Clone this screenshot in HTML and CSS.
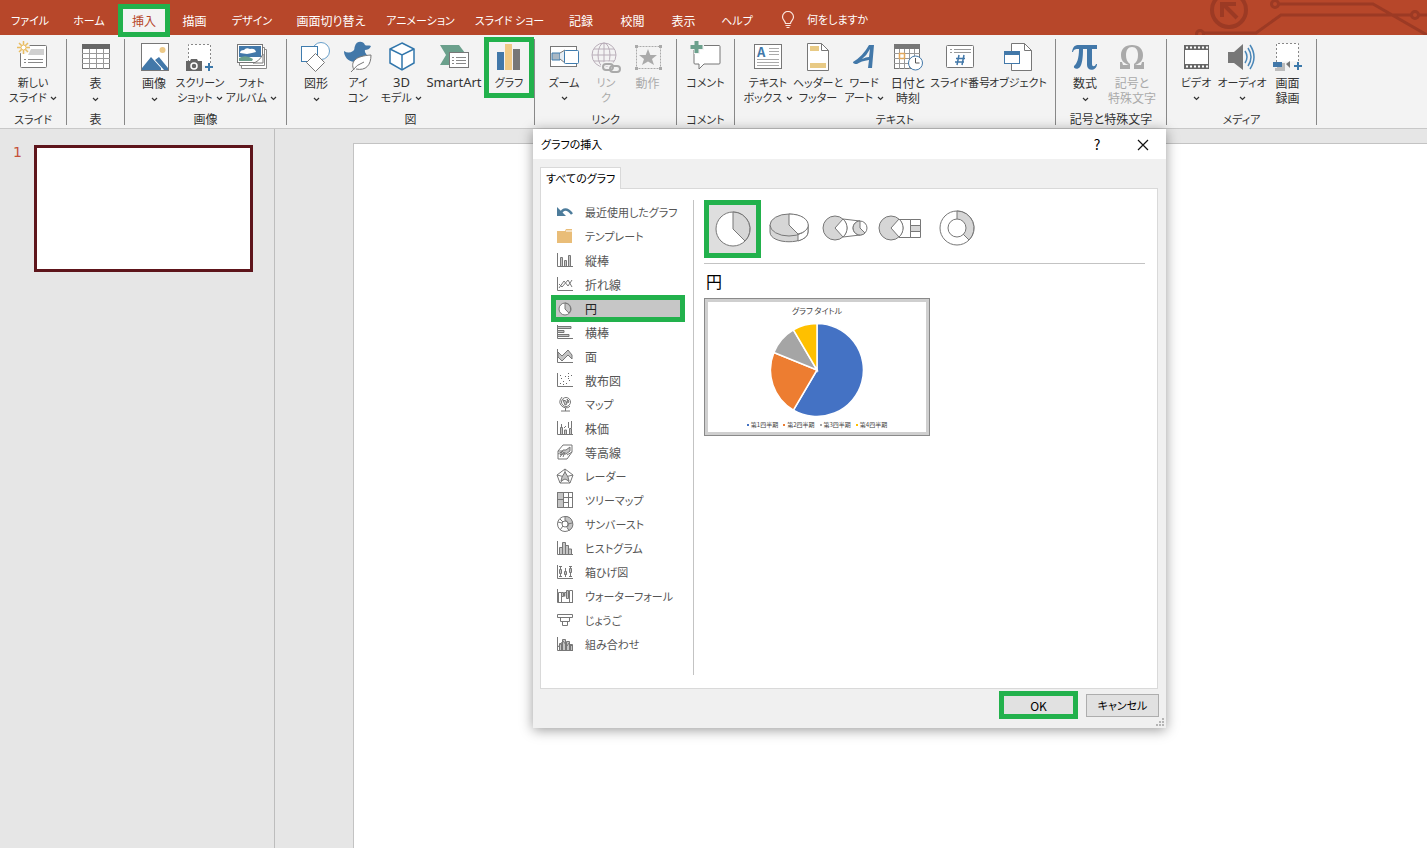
FILE: index.html
```html
<!DOCTYPE html>
<html lang="ja">
<head>
  <meta charset="UTF-8">
  <meta name="viewport" content="width=device-width, initial-scale=1.0">
  <title>グラフの挿入</title>
  <link rel="stylesheet" href="styles.css">
</head>
<body>
  <!-- shared shapes -->
  <svg class="defs" width="0" height="0">
    <symbol id="chev" viewBox="0 0 7 5"><path d="M1 1l2.500 2.500L6 1" fill="none" stroke="#333" stroke-width="1.200"/></symbol>
  </svg>

  <nav class="tabs">
    <div class="tab-list">
      <button class="tab kana">ファイル</button>
      <button class="tab kana">ホーム</button>
      <button class="tab active marked">挿入</button>
      <button class="tab">描画</button>
      <button class="tab kana">デザイン</button>
      <button class="tab">画面切り替え</button>
      <button class="tab kana">アニメーション</button>
      <button class="tab kana">スライド ショー</button>
      <button class="tab">記録</button>
      <button class="tab">校閲</button>
      <button class="tab">表示</button>
      <button class="tab kana">ヘルプ</button>
    </div>
    <button class="tell-me kana">
      <svg width="14" height="18" viewBox="0 0 14 18" fill="none" stroke="#fbe6df" stroke-width="1.200"><path d="M4.500 12.500c0-2.500-3-3.500-3-6.500a5.500 5.500 0 0 1 11 0c0 3-3 4-3 6.500zM4.500 14.500h5M5.500 16.500h3"/></svg>
      何をしますか
    </button>
    <svg class="circuit" width="240" height="35" viewBox="0 0 240 35" fill="none" stroke="#9c3a24" stroke-width="3">
      <circle cx="42" cy="10" r="17" stroke-width="4"/>
      <path d="M50 18L36 4M35 17V4h14" stroke-width="4"/>
      <circle cx="88" cy="4" r="3.500"/>
      <path d="M92 4h94l54 31M17 33h52l25-18h130"/>
      <circle cx="13" cy="34" r="3.500"/>
      <circle cx="228" cy="15" r="3.500"/>
      <path d="M232 15h8"/>
    </svg>
  </nav>

  <div class="ribbon">
    <section class="group">
      <div class="tools cols-slide">
        <button class="tool">
          <svg viewBox="0 0 32 32"><rect x="3.500" y="4.500" width="26" height="22" rx="1" fill="#fff" stroke="#777"/><path d="M14 8h13v6H11z" fill="#d0d0d0"/><path d="M7 18.500h2m2 0h15M7 21.500h2m2 0h15" stroke="#888"/><circle cx="6.500" cy="6.500" r="6.500" fill="#f3f3f3"/><path d="M6.500 0v13M0 6.500h13M2 2l9 9M11 2l-9 9" stroke="#e9bd62" stroke-width="1.500"/><circle cx="6.500" cy="6.500" r="2.500" fill="#fff" stroke="#e9bd62"/></svg>
          <span class="kana">新しい<br>スライド <svg class="chev"><use href="#chev"/></svg></span>
        </button>
      </div>
      <h2 class="kana">スライド</h2>
    </section>

    <section class="group">
      <div class="tools cols-table">
        <button class="tool">
          <svg viewBox="0 0 32 32"><rect x="2.500" y="3.500" width="27" height="24" fill="#fff" stroke="#777"/><path d="M2 3h28v5H2z" fill="#666"/><path d="M2 12.500h28M2 17.500h28M2 22.500h28M9.500 8v20M16.500 8v20M23.500 8v20" stroke="#999"/></svg>
          <span>表<br><svg class="chev"><use href="#chev"/></svg></span>
        </button>
      </div>
      <h2>表</h2>
    </section>

    <section class="group">
      <div class="tools cols-image">
        <button class="tool">
          <svg viewBox="0 0 32 32"><rect x="3.500" y="2.500" width="27" height="27" fill="#fff" stroke="#777"/><circle cx="24.500" cy="9" r="3" fill="#edc987"/><path d="M4 27l9-11 10 11v2H4zM17 19l4-3 9 11v2h-4z" fill="#4278a9"/></svg>
          <span>画像<br><svg class="chev"><use href="#chev"/></svg></span>
        </button>
        <button class="tool">
          <svg viewBox="0 0 32 32"><path d="M4.500 25V3.500h22V24" fill="#fff" stroke="#888" stroke-dasharray="2 2"/><path d="M3 20h3l1-2h6l1 2h4v10H2v-10z" fill="#666"/><circle cx="10" cy="25" r="3" fill="#666" stroke="#fff" stroke-width="1.500"/><path d="M25 22v8M21 26h8" stroke="#3b78aa" stroke-width="2"/></svg>
          <span class="kana">スクリーン<br>ショット <svg class="chev"><use href="#chev"/></svg></span>
        </button>
        <button class="tool">
          <svg viewBox="0 0 32 32"><path d="M5.500 12v15.500h25V8.500H28" fill="#fff" stroke="#888"/><path d="M3.500 9v15.500h25V6.500H26" fill="#fff" stroke="#888"/><rect x="1.500" y="3.500" width="25" height="18" fill="#fff" stroke="#777"/><path d="M3 5h22v11H3z" fill="#4278a9"/><path d="M4 12q0-3 4-3 2-3 6-1 5-1 6 3l-4 1-5 1z" fill="#fff"/><path d="M3 20v-3q7-4 14 1l-1 2z" fill="#6b9f8c"/><path d="M27 13v9H17q6-1 10-9z" fill="#fff" stroke="#777"/></svg>
          <span class="kana">フォト<br>アルバム <svg class="chev"><use href="#chev"/></svg></span>
        </button>
      </div>
      <h2>画像</h2>
    </section>

    <section class="group">
      <div class="tools cols-figure">
        <button class="tool">
          <svg viewBox="0 0 32 32"><circle cx="21" cy="10" r="8.500" fill="#fff" stroke="#69a0cb"/><rect x="1.500" y="5.500" width="16" height="15" fill="#fff" stroke="#3f7cae"/><path d="M15.500 12.500l9 9-9 9-9-9z" fill="#fff" stroke="#777"/></svg>
          <span>図形<br><svg class="chev"><use href="#chev"/></svg></span>
        </button>
        <button class="tool">
          <svg viewBox="0 0 32 32"><path d="M2 10c3 2 6 2 9 0 2-1 1-3 2-5 1-5 8-6 10-1 1 1 4 0 6 1-1 3-4 4-6 4-1 3 3 4 2 8-1 4-7 5-13 4C6 20 2 16 2 10z" fill="#4278a9"/><path d="M12 29c-4-8 1-14 17-15 0 10-5 16-15 14" fill="#fff" stroke="#777"/><path d="M9 31q6-8 13-10" fill="none" stroke="#777"/></svg>
          <span class="kana">アイ<br>コン</span>
        </button>
        <button class="tool">
          <svg viewBox="0 0 32 32" fill="#fff" stroke="#3277ac" stroke-width="1.500"><path d="M16 2l12 6v14l-12 7-12-7V8z"/><path d="M4 8l12 6 12-6M16 14v15" fill="none"/></svg>
          <span class="kana"><span class="latin">3D</span><br>モデル <svg class="chev"><use href="#chev"/></svg></span>
        </button>
        <button class="tool">
          <svg viewBox="0 0 32 32"><path d="M2 4h19l6 8-8 12H2l6-10z" fill="#6ba08c"/><rect x="11.500" y="11.500" width="19" height="15" fill="#fff" stroke="#777"/><path d="M14 16.500h2m2 0h10M14 19.500h2m2 0h10M14 22.500h2m2 0h10" stroke="#888"/></svg>
          <span class="latin">SmartArt</span>
        </button>
        <button class="tool marked">
          <svg viewBox="0 0 32 32"><path d="M4 10h7v18H4z" fill="#4278a9"/><path d="M12 2h7v26h-7z" fill="#efc984"/><path d="M20 7h7v21h-7z" fill="#777"/></svg>
          <span class="kana">グラフ</span>
        </button>
      </div>
      <h2>図</h2>
    </section>

    <section class="group">
      <div class="tools cols-link">
        <button class="tool">
          <svg viewBox="0 0 32 32"><rect x="2.500" y="5.500" width="26" height="20" fill="#fff" stroke="#777"/><path d="M4 12h8v7H4z" fill="#aab8c4" stroke="#3f7cae"/><path d="M12 12l5-3v13l-5-4" fill="#e6edf3" stroke="#777"/><rect x="16.500" y="9.500" width="14" height="13" rx="1" fill="#fff" stroke="#3f7cae"/></svg>
          <span class="kana">ズーム<br><svg class="chev"><use href="#chev"/></svg></span>
        </button>
        <button class="tool" disabled>
          <svg viewBox="0 0 32 32" fill="none" stroke="#b9aeb9"><circle cx="14" cy="14" r="12"/><ellipse cx="14" cy="14" rx="6" ry="12"/><path d="M14 2v24M2 14h24M4 8h20M4 20h20"/><g stroke="#f3f3f3" stroke-width="5"><rect x="13" y="23" width="10" height="6" rx="3"/><rect x="20" y="25" width="10" height="6" rx="3"/></g><g stroke="#aaa" stroke-width="2"><rect x="13" y="23" width="10" height="6" rx="3"/><rect x="20" y="25" width="10" height="6" rx="3"/></g></svg>
          <span class="kana">リン<br>ク</span>
        </button>
        <button class="tool" disabled>
          <svg viewBox="0 0 32 32"><rect x="4.500" y="5.500" width="24" height="22" fill="none" stroke="#aaa" stroke-dasharray="2 1"/><path d="M3 4h3v3H3zM27 4h3v3h-3zM3 26h3v3H3zM27 26h3v3h-3z" fill="#aaa"/><path d="M16 8l2.300 6H25l-5 4 2 6-6-3.500L10 24l2-6-5-4h6.700z" fill="#aaa"/></svg>
          <span>動作</span>
        </button>
      </div>
      <h2 class="kana">リンク</h2>
    </section>

    <section class="group">
      <div class="tools cols-comment">
        <button class="tool">
          <svg viewBox="0 0 32 32"><path d="M6 4.500h23a1 1 0 0 1 1 1V22a1 1 0 0 1-1 1H14l-5 5v-5H5a1 1 0 0 1-1-1V6z" fill="#fff" stroke="#777"/><path d="M7 0v13M0 6h14" stroke="#f3f3f3" stroke-width="6"/><path d="M6.500 0v12M.5 6h12" stroke="#6ba08c" stroke-width="4"/></svg>
          <span class="kana">コメント</span>
        </button>
      </div>
      <h2 class="kana">コメント</h2>
    </section>

    <section class="group">
      <div class="tools cols-text">
        <button class="tool">
          <svg viewBox="0 0 32 32"><rect x="2.500" y="3.500" width="27" height="24" fill="#fff" stroke="#777"/><text x="5" y="16" font-size="13" font-weight="bold" fill="#4278a9">A</text><path d="M17 7.500h10M17 10.500h10M17 13.500h10M5 18.500h22M5 21.500h22M5 24.500h22" stroke="#aaa"/></svg>
          <span class="kana">テキスト<br>ボックス <svg class="chev"><use href="#chev"/></svg></span>
        </button>
        <button class="tool">
          <svg viewBox="0 0 32 32"><path d="M5.500 2.500h14l7 7v20h-21z" fill="#fff" stroke="#777"/><path d="M19.500 2.500v7h7" fill="none" stroke="#777"/><path d="M8 5h9v5H8zM8 22h16v5H8z" fill="#e8ca85"/></svg>
          <span class="kana">ヘッダーと<br>フッター</span>
        </button>
        <button class="tool">
          <svg viewBox="0 0 32 32"><path d="M5 21Q15 15 21 4h5l-2 23h-4l1-8q-8 1-12 4-4 0-4-2zM14 18q4-2 7-2l1-8q-3 6-8 10z" fill="#4278a9" fill-rule="evenodd"/></svg>
          <span class="kana">ワード<br>アート <svg class="chev"><use href="#chev"/></svg></span>
        </button>
        <button class="tool">
          <svg viewBox="0 0 32 32"><rect x="2.500" y="3.500" width="25" height="24" fill="#fff" stroke="#777"/><path d="M2 3h26v5H2z" fill="#777"/><path d="M2 12.500h26M2 17.500h26M2 22.500h26M7.500 8v20M12.500 8v20M17.500 8v20M22.500 8v20" stroke="#999"/><rect x="7.500" y="12.500" width="5" height="5" fill="#fff" stroke="#e2a85c" stroke-width="1.500"/><circle cx="23.500" cy="22" r="7" fill="#fff" stroke="#4278a9"/><path d="M23.500 17v5h4" fill="none" stroke="#555"/></svg>
          <span>日付と<br>時刻</span>
        </button>
        <button class="tool">
          <svg viewBox="0 0 32 32"><rect x="2.500" y="4.500" width="27" height="22" rx="1" fill="#fff" stroke="#777"/><path d="M6 8.500h2m2 0h17M6 11.500h2m2 0h17" stroke="#999"/><path d="M15 14l-2 10M20 14l-2 10M12 17.500h9M11 21h9" stroke="#4278a9" stroke-width="1.500"/></svg>
          <span class="kana">スライド番号</span>
        </button>
        <button class="tool">
          <svg viewBox="0 0 32 32"><path d="M9.500 2.500h13l7 7v20h-20z" fill="#fff" stroke="#777"/><path d="M22.500 2.500v7h7" fill="none" stroke="#777"/><rect x="2.500" y="10.500" width="15" height="12" fill="#fff" stroke="#4278a9"/><path d="M2 10h16v4H2z" fill="#4278a9"/></svg>
          <span class="kana">オブジェクト</span>
        </button>
      </div>
      <h2 class="kana">テキスト</h2>
    </section>

    <section class="group">
      <div class="tools cols-symbol">
        <button class="tool">
          <svg viewBox="0 0 32 32"><path d="M3 11c1-6 3-7 7-7h18v4h-5v15c0 3 3 3 4 0h1c0 7-10 8-10 1V8h-4c0 9-1 15-3 18-2 3-7 2-6-1 3-2 5-8 5-17-4 0-5 0-6 3z" fill="#4278a9"/></svg>
          <span>数式<br><svg class="chev"><use href="#chev"/></svg></span>
        </button>
        <button class="tool" disabled>
          <svg viewBox="0 0 32 32"><path d="M4 28v-7h2l1 3h6C7 22 5 19 5 14 5 8 9 4 16 4s11 4 11 10c0 5-2 8-8 10h6l1-3h2v7H18v-5c3-2 4-5 4-9 0-5-2-8-6-8s-6 3-6 8c0 4 1 7 4 9v5z" fill="#aaa"/></svg>
          <span>記号と<br>特殊文字</span>
        </button>
      </div>
      <h2>記号と特殊文字</h2>
    </section>

    <section class="group">
      <div class="tools cols-media">
        <button class="tool">
          <svg viewBox="0 0 32 32"><path d="M4 4h25v24H4z" fill="#666"/><path d="M5 9h23v14H5z" fill="#fff"/><path d="M6 6.500h22M6 25.500h22" stroke="#fff" stroke-width="2" stroke-dasharray="2 2"/></svg>
          <span class="kana">ビデオ<br><svg class="chev"><use href="#chev"/></svg></span>
        </button>
        <button class="tool">
          <svg viewBox="0 0 32 32"><path d="M2 11h6l9-8v26l-9-7H2z" fill="#777"/><path d="M19 10q4 6 0 12M22 7q6 9 0 18M24 4q8 12 0 24" fill="none" stroke="#4a87b8" stroke-width="1.500"/></svg>
          <span class="kana">オーディオ<br><svg class="chev"><use href="#chev"/></svg></span>
        </button>
        <button class="tool">
          <svg viewBox="0 0 32 32"><path d="M4.500 21V2.500h22V20" fill="#fff" stroke="#888" stroke-dasharray="2 2"/><path d="M5 22h8v8H3v-3h2z" fill="#bbb"/><path d="M1 21h9v5H1z" fill="#4278a9"/><path d="M14 23l4-3v7z" fill="#777"/><path d="M26 21v8M22 25h8" stroke="#3b78aa" stroke-width="2"/></svg>
          <span>画面<br>録画</span>
        </button>
      </div>
      <h2 class="kana">メディア</h2>
    </section>
  </div>

  <div class="workspace">
    <aside class="slides">
      <span class="slide-number">1</span>
      <button class="slide-thumb" aria-label="スライド 1"></button>
    </aside>

    <main class="editor">
      <div class="slide"></div>

      <div class="dialog" role="dialog" aria-labelledby="dialog-title">
        <header class="dialog-title">
          <h1 id="dialog-title" class="kana">グラフの挿入</h1>
          <button class="help">?</button>
          <button class="close" aria-label="閉じる"><svg width="12" height="12" viewBox="0 0 12 12"><path d="M1 1l10 10M11 1L1 11" stroke="#111" stroke-width="1.200"/></svg></button>
        </header>

        <button class="panel-tab kana">すべてのグラフ</button>
        <div class="panel">
          <ul class="kinds">
            <li><button class="kana"><svg viewBox="0 0 18 18"><path d="M4 11Q9 2 16 11" fill="none" stroke="#4d7c9b" stroke-width="2.500"/><path d="M1 4v9h9z" fill="#4d7c9b"/></svg>最近使用したグラフ</button></li>
            <li><button class="kana"><svg viewBox="0 0 18 18"><path d="M1 4h8l1-2h6v14H1z" fill="#e9bd78"/><path d="M10 4h6" stroke="#fff"/></svg>テンプレート</button></li>
            <li><button><svg viewBox="0 0 18 18"><path class="axis" d="M1.500 2v13.500H17"/><path class="shape" d="M4.500 15V6.500h2V15M8.500 15V9.500h2V15M12.500 15V4.500h2V15"/></svg>縦棒</button></li>
            <li><button><svg viewBox="0 0 18 18"><path class="axis" d="M1.500 2v13.500H17"/><path class="line" d="M3 13l5-7 4 5 4-6M3 9l3 3 6-7 4 7"/></svg>折れ線</button></li>
            <li><button class="selected marked"><svg viewBox="0 0 18 18"><circle cx="9" cy="9" r="6" fill="#fff" stroke="#777"/><path class="shape" d="M9 9V3a6 6 0 0 1 4 10.200z"/></svg>円</button></li>
            <li><button><svg viewBox="0 0 18 18"><path class="axis" d="M1.500 2v13.500H17"/><path class="shape" d="M2 3.500h13v2H2M2 7.500h6v2H2M2 11.500h11v2H2"/></svg>横棒</button></li>
            <li><button><svg viewBox="0 0 18 18"><path class="axis" d="M1.500 2v13.500H17"/><path class="shape" d="M2 5l4 4 6-6 4 5v4l-4-4-6 6-4-4z"/></svg>面</button></li>
            <li><button><svg viewBox="0 0 18 18"><path class="axis" d="M1.500 2v13.500H17"/><path d="M4 12.500h1m2-2h1m2 2h1m2-3h1M5 7.500h1m3-2h1m2 2h1m2-3h1M7 13.500h1m-4-9h1m7 1h1M12 2.500h1" stroke="#666"/></svg>散布図</button></li>
            <li><button class="kana"><svg viewBox="0 0 18 18"><circle class="line" cx="10" cy="7" r="4.500"/><path class="shape" d="M7 5l3 1 1 3-2 1zM11 4l2 2-1 2z"/><path class="line" d="M6 2q-5 6 1 10 5 2 7-1M9.500 13v3M5 16h9"/></svg>マップ</button></li>
            <li><button><svg viewBox="0 0 18 18"><path class="axis" d="M1.500 2v13.500H17"/><path class="shape" d="M4.500 15V8.500h2V15M8.500 15v-4h2v4M13.500 15V9.500h2V15"/><path class="line" d="M5.500 8V5M8 9l2-2M12.500 3v6M15.500 9V2"/></svg>株価</button></li>
            <li><button><svg viewBox="0 0 18 18"><path class="line" d="M2 8l5-6h9v7l-5 7H2z"/><path class="shape" d="M4 12l3-5h3l4-3v4l-4 3H7z"/><path class="line" d="M2 11l5-3M4 14l4-5M7 14l2-5M2 8h4M11 12l5-3"/></svg>等高線</button></li>
            <li><button class="kana"><svg viewBox="0 0 18 18"><path class="line" d="M9 2l8 6-3 8H4L1 8zM9 2v8M17 8l-8 2 5 6M1 8l8 2-5 6"/><path class="shape" d="M9 5l3 5 1 4-4-2-4 2 1-4z"/></svg>レーダー</button></li>
            <li><button class="kana"><svg viewBox="0 0 18 18"><rect class="line" x="1.500" y="1.500" width="15" height="15"/><path class="shape" d="M1.500 1.500h6v15h-6z"/><path class="line" d="M1.500 8.500h6M7.500 6.500h9M7.500 11.500h5M12.500 6.500v10M12.500 1.500v5"/></svg>ツリーマップ</button></li>
            <li><button class="kana"><svg viewBox="0 0 18 18"><circle class="line" cx="9" cy="9" r="7.500"/><path class="shape" d="M9 1.500a7.500 7.500 0 0 1 4 14l-2-3a4 4 0 0 0-2-7z"/><circle cx="9" cy="9" r="3" fill="#fff" stroke="#777"/><path class="line" d="M2 7l4 1M4 15l3-4M12 9l4-1M4 4l3 3"/></svg>サンバースト</button></li>
            <li><button class="kana"><svg viewBox="0 0 18 18"><path class="axis" d="M1.500 2v13.500H17"/><path class="shape" d="M3.500 15V8.500h3V15M6.500 15V3.500h3V15M9.500 15V6.500h3V15M12.500 15v-5h3v5"/></svg>ヒストグラム</button></li>
            <li><button class="kana"><svg viewBox="0 0 18 18"><path class="axis" d="M1.500 2v13.500H17"/><path class="shape" d="M3.500 6.500h2v4h-2zM8.500 8.500h2v3h-2zM13.500 5.500h2v4h-2z"/><path class="line" d="M4.500 3v3M4.500 11v3M9.500 5v3M9.500 12v2M14.500 3v2M14.500 10v4M3 3.500h3M13 3.500h3M3 13.500h3M13 13.500h3"/></svg>箱ひげ図</button></li>
            <li><button class="kana"><svg viewBox="0 0 18 18"><path class="axis" d="M1.500 2v13.500H17"/><path class="line" d="M2.500 15V5.500h3V15M13.500 15V3.500h3V15"/><path class="shape" d="M5.500 5.500h2v4h-2zM8.500 9.500V5.500h2v4M10.500 3.500h2v8h-2z"/></svg>ウォーターフォール</button></li>
            <li><button class="kana"><svg viewBox="0 0 18 18"><path class="line" d="M1.500 3.500h15v3h-15zM4.500 6.500h9v4h-9zM6.500 10.500h5v4h-5z"/></svg>じょうご</button></li>
            <li><button class="kana"><svg viewBox="0 0 18 18"><path class="axis" d="M1.500 2v13.500H17"/><path class="shape" d="M3.500 15V8.500h2V15M6.500 15V4.500h3V15M10.500 15V6.500h3V15M14.500 15V9.500h2V15"/><path class="line" d="M2 12l5-6 4 5 2-3 4 4"/></svg>組み合わせ</button></li>
          </ul>

          <div class="detail">
            <div class="subtypes">
              <button class="selected marked" aria-label="円"><svg viewBox="0 0 46 46"><circle cx="23" cy="23" r="17" fill="#fff" stroke="#777"/><path class="wedge" d="M23 23V6a17 17 0 0 1 12 29z"/></svg></button>
              <button aria-label="3-D 円"><svg viewBox="0 0 46 46"><path class="wedge" d="M4 20v7c0 13 38 13 38 0v-7z"/><path d="M32 30v6q10-3 10-9v-7z" fill="#fff" stroke="#777"/><ellipse class="wedge" cx="23" cy="20" rx="19" ry="11"/><path d="M23 20V9c21 0 26 16 9 20z" fill="#fff" stroke="#777"/></svg></button>
              <button aria-label="補助円グラフ付き円"><svg viewBox="0 0 46 46"><circle class="wedge" cx="13" cy="23" r="12"/><path d="M13 23l8-9a12 12 0 0 1 0 18z" fill="#fff" stroke="#777"/><path class="link" d="M21 14l17 2M21 32l17-2"/><circle cx="38" cy="23" r="7" fill="#fff" stroke="#777"/><path class="wedge" d="M38 23v-7a7 7 0 1 0 5 12z"/></svg></button>
              <button aria-label="補助縦棒付き円"><svg viewBox="0 0 46 46"><circle class="wedge" cx="13" cy="23" r="12"/><path d="M13 23l8-9a12 12 0 0 1 0 18z" fill="#fff" stroke="#777"/><path class="link" d="M21 14.500h12M21 32.500h12"/><path d="M32.500 14.500h10v18h-10z" fill="#fff" stroke="#777"/><path class="wedge" d="M32.500 20.500h10v6h-10z"/></svg></button>
              <button aria-label="ドーナツ"><svg viewBox="0 0 46 46"><circle cx="23" cy="23" r="17" fill="#fff" stroke="#777"/><path class="wedge" d="M23 23V6a17 17 0 0 1 12 29z"/><circle cx="23" cy="23" r="9" fill="#fff" stroke="#777"/></svg></button>
            </div>
            <h2>円</h2>
            <figure class="preview">
              <figcaption>グラフ タイトル</figcaption>
              <svg width="94" height="94" viewBox="-47 -47 94 94" stroke="#fff" stroke-width="1.500">
                <path d="M0 0V-46.500A46.500 46.500 0 1 1-23.600 40.100z" fill="#4472c4"/>
                <path d="M0 0L-23.600 40.100A46.500 46.500 0 0 1-43.100-17.500z" fill="#ed7d31"/>
                <path d="M0 0L-43.100-17.500A46.500 46.500 0 0 1-23.600-40.100z" fill="#a5a5a5"/>
                <path d="M0 0L-23.600-40.100A46.500 46.500 0 0 1 0-46.500z" fill="#ffc000"/>
              </svg>
              <ul class="legend">
                <li class="q1">第1四半期</li>
                <li class="q2">第2四半期</li>
                <li class="q3">第3四半期</li>
                <li class="q4">第4四半期</li>
              </ul>
            </figure>
          </div>
        </div>

        <footer class="actions">
          <button class="ok marked">OK</button>
          <button class="cancel kana">キャンセル</button>
        </footer>
        <svg class="grip" width="8" height="8" viewBox="0 0 8 8" fill="#b5b5b5"><path d="M6 0h2v2H6zM3 3h2v2H3zM6 3h2v2H6zM0 6h2v2H0zM3 6h2v2H3zM6 6h2v2H6z"/></svg>
      </div>
    </main>
  </div>
</body>
</html>
```

FILE: styles.css
```css
* {
  box-sizing: border-box;
}

body {
  margin: 0;
  height: 100vh;
  display: flex;
  flex-direction: column;
  overflow: hidden;
  background-color: #e6e6e6;
  color: #333;
  font-family: "Noto Sans CJK JP", sans-serif;
  font-size: 12px;
  line-height: 15px;
  font-feature-settings: "palt";
}

button {
  margin: 0;
  padding: 0;
  border: 0;
  background: none;
  color: inherit;
  font: inherit;
  font-feature-settings: inherit;
  white-space: nowrap;
}

h1,
h2,
ul,
figure {
  margin: 0;
  padding: 0;
  font-size: 12px;
  font-weight: normal;
  list-style: none;
}

.defs {
  position: absolute;
}

/* kana labels run a size smaller */
.kana {
  font-size: 11px;
}

/* green frame round the things to click */
.marked {
  border: 5px solid #22b14c;
}

/* Ribbon tabs */
.tabs {
  flex: none;
  display: flex;
  height: 35px;
  background-color: #b7472a;
  color: #fff;
}

.tab-list {
  display: grid;
  grid-template-columns: 60px 58px 52px 49px 66px 92px 87px 91px 52px 51px 51px 56px;
}

.tab {
  display: flex;
  align-items: center;
  justify-content: center;
  padding-top: 4px;
}

.tab.active {
  height: 33px;
  margin-top: 4px;
  padding: 0;
  background-color: #f3f3f3;
  color: #b7472a;
  z-index: 1;
}

.tell-me {
  display: flex;
  align-items: center;
  gap: 12px;
  padding: 4px 0 0 16px;
}

.circuit {
  margin-left: auto;
}

/* Ribbon */
.ribbon {
  flex: none;
  display: flex;
  padding: 4px 0 3px;
  background-color: #f3f3f3;
  border-bottom: 1px solid #c8c8c8;
}

.group {
  display: flex;
  flex-direction: column;
  justify-content: space-between;
  height: 86px;
  border-right: 1px solid #888;
}

.group h2 {
  line-height: 12px;
  text-align: center;
  white-space: nowrap;
}

.tools {
  display: grid;
  height: 70px;
  padding: 0 8px;
}

.cols-slide { grid-template-columns: 50px; }
.cols-table { grid-template-columns: 41px; }
.cols-image { grid-template-columns: 42px 50px 53px; }
.cols-figure { grid-template-columns: 42px 42px 45px 60px 50px; padding-right: 0; }
.cols-link { grid-template-columns: 42px 42px 41px; }
.cols-comment { grid-template-columns: 41px; }
.cols-text { grid-template-columns: 50px 50px 42px 46px 58px 58px; }
.cols-symbol { grid-template-columns: 42px 52px; }
.cols-media { grid-template-columns: 42px 50px 41px; }

.tool {
  display: flex;
  flex-direction: column;
  align-items: center;
  gap: 2px;
  padding-top: 2px;
}

.tool > svg {
  flex: none;
  width: 32px;
  height: 32px;
}

.tool:disabled {
  color: #aaa;
}

.tool.marked {
  gap: 1px;
  height: 61px;
  margin-top: -2px;
  padding: 0;
}

.latin {
  font-family: "Noto Sans", sans-serif;
  font-size: 13px;
}

.chev {
  width: 7px;
  height: 5px;
  margin-left: 1px;
  vertical-align: 1px;
}

/* Workspace */
.workspace {
  flex: 1;
  display: flex;
  min-height: 0;
}

.slides {
  flex: none;
  display: flex;
  align-items: flex-start;
  gap: 12px;
  width: 275px;
  padding: 16px 21px 0 13px;
  border-right: 1px solid #bdbdbd;
}

.slide-number {
  color: #c5513a;
  font-family: "DejaVu Sans", sans-serif;
  font-size: 14px;
}

.slide-thumb {
  flex: 1;
  height: 127px;
  border: 3px solid #5e151b;
  background-color: #fff;
}

.editor {
  flex: 1;
  position: relative;
  display: flex;
  padding: 14px 0 0 78px;
}

.slide {
  flex: 1;
  border: 1px solid #c3c3c3;
  border-width: 1px 0 0 1px;
  background-color: #fff;
}

/* Chart dialog, centred over the editor */
.dialog {
  position: absolute;
  top: 0;
  left: 0;
  right: 3px;
  width: 633px;
  margin: 0 auto;
  padding-bottom: 7px;
  background-color: #f0f0f0;
  box-shadow: 0 2px 12px rgba(0, 0, 0, 0.4);
  color: #000;
}

.dialog-title {
  display: flex;
  align-items: center;
  height: 30px;
  padding-left: 8px;
  background-color: #fff;
}

.dialog-title h1 {
  flex: 1;
}

.help,
.close {
  width: 46px;
  height: 30px;
  font-size: 14px;
}

.close svg {
  vertical-align: -1px;
}

.panel-tab {
  display: block;
  position: relative;
  z-index: 1;
  height: 22px;
  margin: 8px 0 -1px 7px;
  padding: 0 5px;
  border: 1px solid #d9d9d9;
  border-bottom: 0;
  background-color: #fff;
}

.panel {
  display: flex;
  margin: 0 8px 0 7px;
  padding: 11px 12px 13px 10px;
  border: 1px solid #d9d9d9;
  background-color: #fff;
}

.kinds {
  width: 143px;
  height: 475px;
  border-right: 1px solid #c3c3c3;
  color: #555;
}

.kinds li {
  display: flex;
  height: 24px;
}

.kinds button {
  display: flex;
  align-items: center;
  gap: 11px;
  width: 134px;
  padding-left: 5px;
}

.kinds button.selected {
  height: 27px;
  margin-top: -1px;
  padding: 0;
  background-color: #c6c6c6;
  color: #222;
}

.kinds svg {
  width: 18px;
  height: 18px;
}

.axis,
.line {
  fill: none;
  stroke: #777;
}

.shape {
  fill: #c4c4c4;
  stroke: #777;
}

.wedge {
  fill: #d6d6d6;
  stroke: #777;
}

.link {
  stroke: #777;
}

.detail {
  flex: 1;
  padding-left: 10px;
}

.subtypes {
  display: flex;
  height: 64px;
  border-bottom: 1px solid #c3c3c3;
}

.subtypes button {
  display: flex;
  align-items: center;
  justify-content: center;
  width: 56px;
  height: 56px;
}

.subtypes button.selected {
  width: 57px;
  height: 58px;
  background-color: #dedede;
}

.subtypes svg {
  flex: none;
  width: 46px;
  height: 46px;
}

.detail h2 {
  margin: 5px 0 5px 2px;
  font-size: 16px;
  line-height: 24px;
}

.preview {
  display: flex;
  flex-direction: column;
  align-items: center;
  width: 226px;
  height: 138px;
  padding-top: 4px;
  border: 1px solid #8a8a8a;
  box-shadow: inset 0 0 0 3px #cfcfcf;
  color: #444;
}

.preview figcaption {
  margin-bottom: 4px;
  font-size: 8px;
  line-height: 16px;
}

.legend {
  display: flex;
  gap: 5px;
  margin-top: 2px;
  font-size: 6px;
  line-height: 12px;
}

.legend li {
  display: flex;
  align-items: center;
  gap: 2px;
}

.legend li::before {
  content: "";
  width: 2px;
  height: 2px;
  background-color: #4472c4;
}

.legend .q2::before { background-color: #ed7d31; }
.legend .q3::before { background-color: #a5a5a5; }
.legend .q4::before { background-color: #ffc000; }

.actions {
  display: flex;
  justify-content: flex-end;
  align-items: center;
  gap: 8px;
  padding: 2px 7px 2px 0;
}

.ok {
  width: 79px;
  height: 28px;
  background-color: #e1e1e1;
}

.cancel {
  width: 73px;
  height: 23px;
  border: 1px solid #adadad;
  background-color: #e1e1e1;
}

.grip {
  position: absolute;
  right: 2px;
  bottom: 2px;
}
```
